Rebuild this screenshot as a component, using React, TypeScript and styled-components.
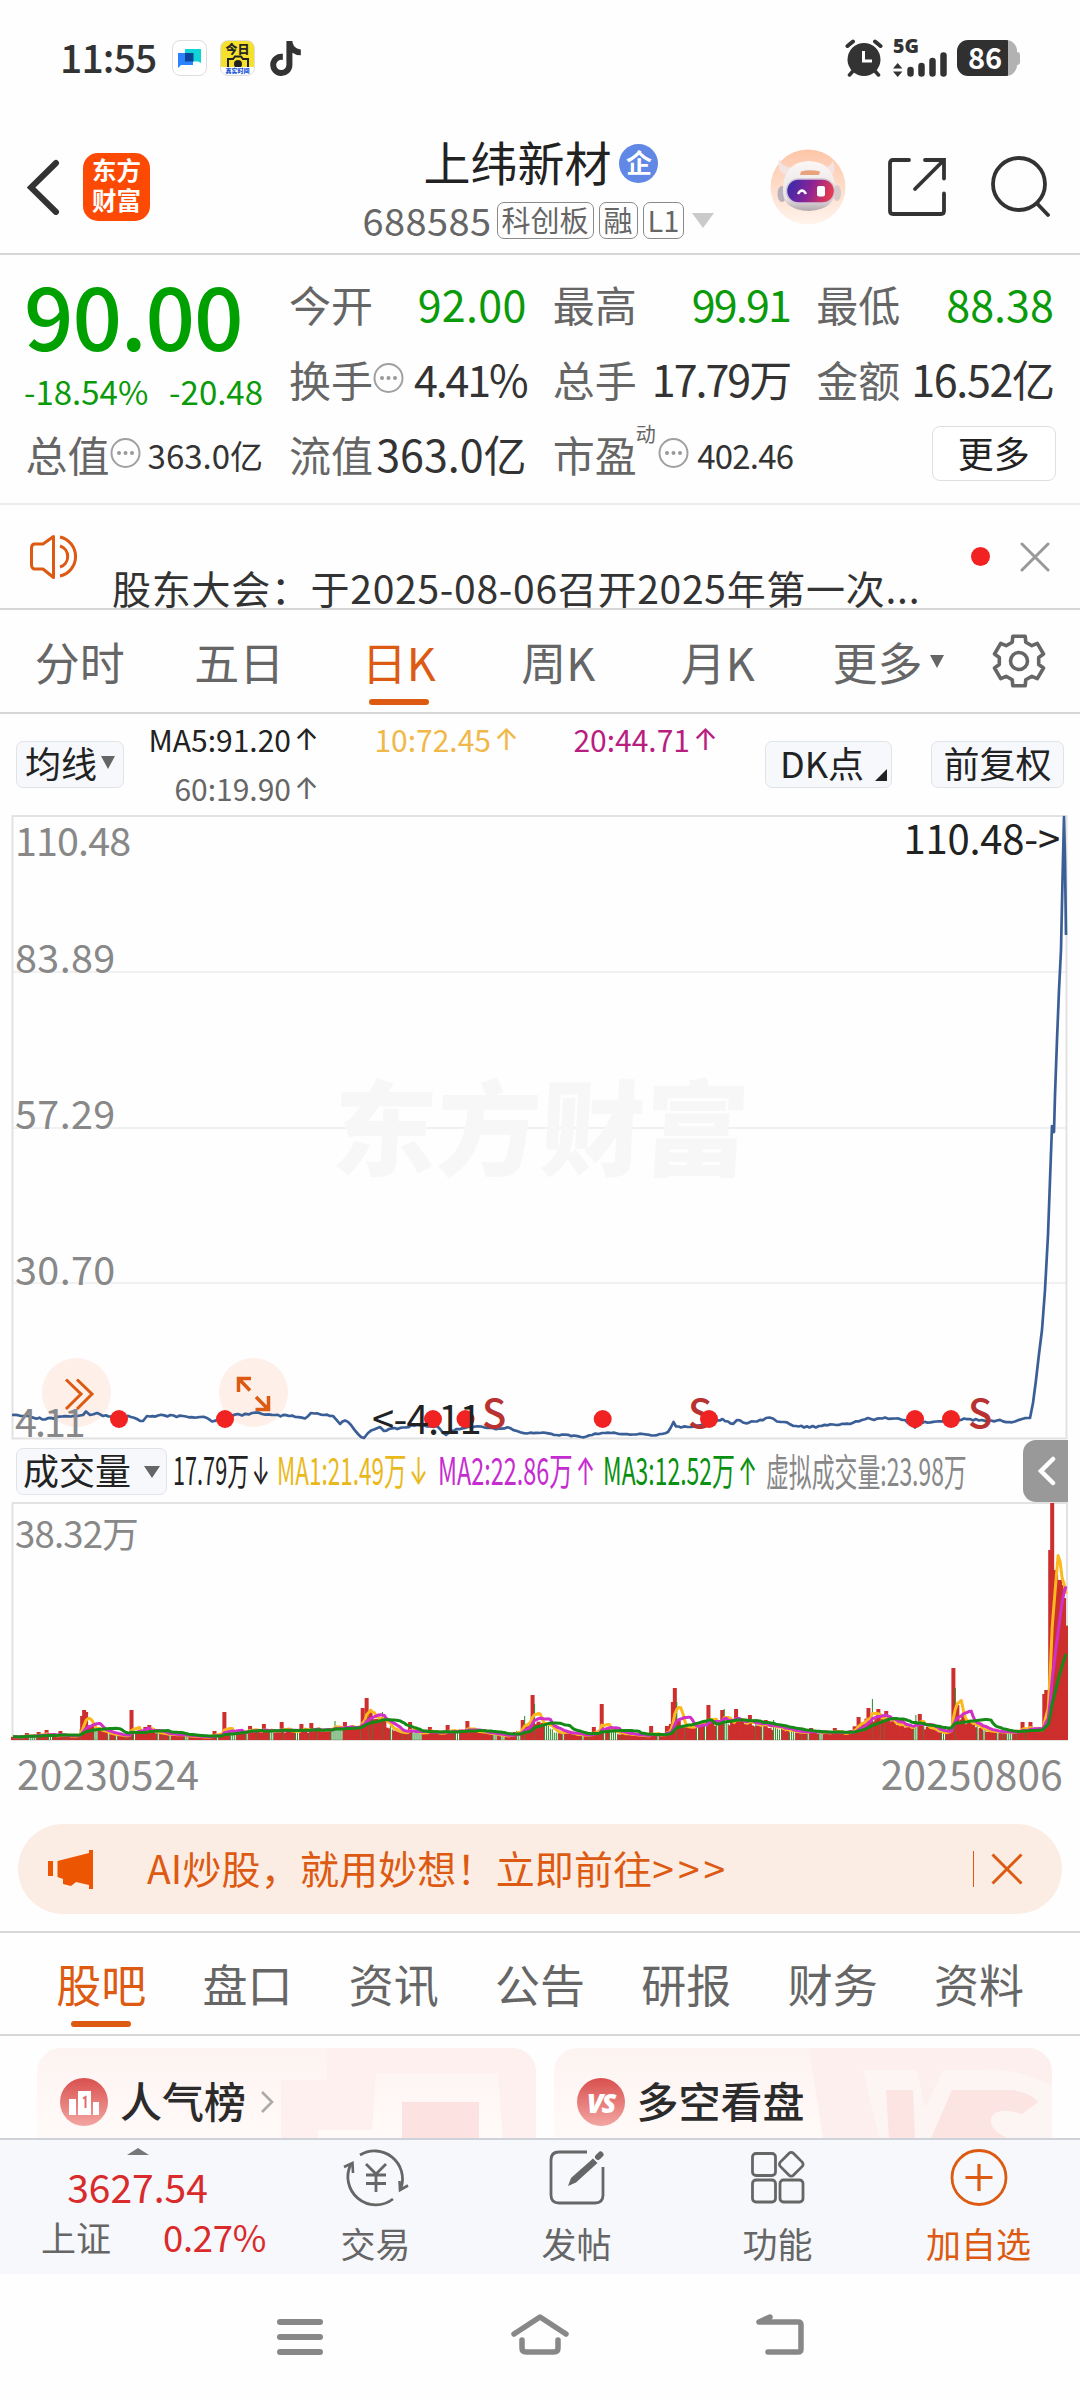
import React, { useLayoutEffect, useRef, useState } from 'react';
import styled, { createGlobalStyle, css } from 'styled-components';
import { FaTiktok } from 'react-icons/fa6';

const C = {
  ink: '#262626',
  dark: '#333',
  mid: '#666',
  light: '#888',
  green: '#0a9a0a',
  red: '#d92b2b',
  orange: '#dc5a12',
  rule: '#d6d6d6',
  panel: '#f6f8fb',
};

const GlobalStyle = createGlobalStyle`
  * { box-sizing: border-box; }
  body {
    margin: 0;
    background: #fefefe;
    font-family: "Noto Sans CJK SC", "Noto Sans", sans-serif;
    color: ${C.ink};
  }
  svg { display: block; flex: none; }
`;

const Screen = styled.div`
  width: 1080px;
  height: 2400px;
  overflow: hidden;
  display: flex;
  flex-direction: column;
  white-space: nowrap;
`;

/* ---------- status bar ---------- */

const StatusBar = styled.div`
  height: 116px;
  flex: none;
  display: flex;
  align-items: center;
  padding: 0 60px 0 60px;
`;

const Clock = styled.div`
  width: 112px;
  font-size: 39px;
  line-height: 56px;
  font-weight: 500;
  letter-spacing: -0.8px;
  color: ${C.dark};
  margin-top: -5px;
`;

const StatusApps = styled.div`
  display: flex;
  align-items: center;
  gap: 13px;
`;

const AppTile = styled.div<{ $yellow?: boolean }>`
  width: 35px;
  height: 36px;
  border-radius: 8px;
  border: 1px solid #dedede;
  background: ${p => (p.$yellow ? 'linear-gradient(#f5e02c 0 76%, #fff 76%)' : '#fff')};
  display: flex;
  flex-direction: column;
  align-items: center;
  justify-content: center;
  overflow: hidden;
`;

const TinyTop = styled.div`
  font-size: 12px;
  line-height: 13px;
  font-weight: 900;
`;

const TinyBottom = styled.div`
  font-size: 6px;
  line-height: 8px;
  font-weight: 900;
  color: #1c55d8;
`;

const StatusRight = styled.div`
  margin-left: auto;
  display: flex;
  align-items: center;
  gap: 10px;
`;

const Signal = styled.div`
  width: 54px;
  display: flex;
  flex-direction: column;
`;

const NetLabel = styled.div`
  font-family: "Open Sans", "Noto Sans", sans-serif;
  font-size: 19.5px;
  line-height: 14px;
  height: 13px;
  font-weight: 800;
  color: ${C.dark};
`;

const Battery = styled.div`
  width: 60px;
  height: 36px;
  border-radius: 11px;
  background: linear-gradient(90deg, #303030 0 51px, #b2b2b2 51px);
  color: #fff;
  font-size: 29px;
  line-height: 33px;
  font-weight: 700;
  padding-left: 11px;
`;

const BatteryWrap = styled.div`
  display: flex;
  align-items: center;
`;

const BatteryTip = styled.div`
  width: 3px;
  height: 13px;
  border-radius: 0 3px 3px 0;
  background: #b2b2b2;
`;

/* ---------- header ---------- */

const Header = styled.header`
  height: 139px;
  flex: none;
  padding: 5px 30px 0 27px;
  border-bottom: 2px solid ${C.rule};
  display: grid;
  grid-template-columns: 1fr auto 1fr;
  align-items: center;
`;

const HeaderLeft = styled.div`
  display: flex;
  align-items: center;
  gap: 23px;
`;

const HeaderRight = styled.div`
  display: flex;
  align-items: center;
  justify-content: flex-end;
  gap: 42px;
`;

const Brand = styled.div`
  width: 67px;
  height: 68px;
  border-radius: 15px;
  background: #fc4a04;
  color: #fff;
  font-weight: 700;
  font-size: 24.5px;
  line-height: 30px;
  text-align: center;
  padding-top: 2px;
`;

const TitleColumn = styled.div`
  display: flex;
  flex-direction: column;
  align-items: center;
`;

const TitleRow = styled.div`
  height: 62px;
  display: flex;
  align-items: center;
  gap: 8px;
  font-size: 47px;
  line-height: 60px;
  padding: 0 0 0 5px;
  color: #222;
`;

const Enterprise = styled.span`
  width: 39px;
  height: 39px;
  border-radius: 50%;
  background: #6088e4;
  color: #fff;
  font-size: 26px;
  line-height: 36px;
  font-weight: 700;
  text-align: center;
  margin-top: 5px;
`;

const CodeRow = styled.div`
  height: 52px;
  display: flex;
  align-items: center;
  gap: 5px;
  font-size: 38px;
  line-height: 50px;
  padding-top: 4px;
  color: ${C.mid};
`;

const Code = styled.span`
  letter-spacing: 0.4px;
`;

const Tag = styled.span`
  height: 37px;
  padding: 0 4px;
  border: 1.5px solid #8a8a8a;
  border-radius: 7px;
  font-size: 29px;
  line-height: 32px;
`;

const Triangle = styled.span<{ $w: number; $h: number; $c: string; $up?: boolean }>`
  flex: none;
  width: 0;
  height: 0;
  border-left: ${p => p.$w / 2}px solid transparent;
  border-right: ${p => p.$w / 2}px solid transparent;
  ${p =>
    p.$up
      ? css`border-bottom: ${p.$h}px solid ${p.$c};`
      : css`border-top: ${p.$h}px solid ${p.$c};`}
`;

const CodeArrow = styled(Triangle)`
  margin-left: 3px;
`;

/* ---------- quote panel ---------- */

const QuotePanel = styled.section`
  height: 250px;
  flex: none;
  padding: 11px 26px 0 27px;
  border-bottom: 2px solid #ececec;
  display: grid;
  grid-template-columns: repeat(4, 236px);
  grid-template-rows: repeat(3, 75px);
  column-gap: 27.6px;
`;

const LastPrice = styled.div`
  grid-row: span 2;
  color: #00a000;
  padding-top: 7px;
`;

const BigNumber = styled.div`
  font-size: 87px;
  line-height: 80px;
  font-weight: 500;
  letter-spacing: -1.2px;
  margin-left: -3px;
`;

const Change = styled.div`
  margin-top: 16px;
  display: flex;
  justify-content: space-between;
  font-size: 33px;
  line-height: 44px;
  margin-left: -3px;
  color: ${C.green};
`;

const Cell = styled.div`
  display: flex;
  align-items: center;
  line-height: 75px;
`;

const CellLabel = styled.span`
  font-size: 42px;
  color: ${C.mid};
  margin-left: -1.5px;
`;

const Sup = styled.span`
  font-size: 20px;
  line-height: 24px;
  color: ${C.mid};
  align-self: flex-start;
  margin: 6px 2px 0 -1px;
`;

const CellValue = styled.span<{ $green?: boolean; $small?: boolean; $ls?: number }>`
  margin-left: auto;
  font-size: ${p => (p.$small ? 33 : 43)}px;
  letter-spacing: ${p => p.$ls ?? 0}px;
  color: ${p => (p.$green ? C.green : C.dark)};
  padding-top: ${p => (p.$small ? 3 : 0)}px;
`;

const RatioValue = styled(CellValue)`
  margin-right: -3px;
`;

const MoreButton = styled.button`
  margin: 0 -2px 0 auto;
  width: 124px;
  height: 55px;
  border: 1.5px solid #dfdfdf;
  border-radius: 8px;
  background: #fff;
  font: inherit;
  font-size: 36px;
  line-height: 46px;
  color: #222;
  padding: 0 0 4px;
`;

/* ---------- notice ---------- */

const Notice = styled.section`
  height: 105px;
  flex: none;
  border-bottom: 2px solid ${C.rule};
  display: flex;
  align-items: center;
  padding: 0 30px 0 29px;
`;

const NoticeText = styled.div`
  width: 821px;
  margin: 60px 0 0 31px;
  font-size: 39px;
  line-height: 40px;
  letter-spacing: 0.72px;
  color: ${C.dark};
`;

const RedDot = styled.span`
  width: 19px;
  height: 19px;
  border-radius: 50%;
  background: #f22222;
  margin: 0 30px 0 auto;
`;

/* ---------- tab rows ---------- */

const PeriodTabs = styled.nav`
  height: 104px;
  flex: none;
  display: flex;
  align-items: center;
  border-bottom: 2px solid ${C.rule};
`;

const Tab = styled.div<{ $w: number; $active?: boolean; $bar?: number }>`
  position: relative;
  width: ${p => p.$w}px;
  height: 100%;
  display: flex;
  align-items: center;
  justify-content: center;
  font-size: 45px;
  color: ${p => (p.$active ? C.orange : C.mid)};
  ${p =>
    p.$active &&
    css`
      &::after {
        content: '';
        position: absolute;
        left: calc(50% - 30px);
        bottom: ${p.$bar ?? 7}px;
        width: 60px;
        height: 6px;
        border-radius: 3px;
        background: ${C.orange};
      }
    `}
`;

const MoreTab = styled.div`
  width: 193px;
  padding-left: 35px;
  display: flex;
  align-items: center;
  gap: 7px;
  font-size: 45px;
  color: ${C.mid};
`;

const InfoTabs = styled.nav`
  height: 105px;
  flex: none;
  padding-left: 28px;
  display: flex;
  align-items: center;
  border-top: 2px solid ${C.rule};
  border-bottom: 2px solid ${C.rule};
`;

/* ---------- chart controls ---------- */

const ChartControls = styled.div`
  height: 100px;
  flex: none;
  display: flex;
  align-items: center;
  padding: 0 16px;
`;

const Chip = styled.button<{ $w: number; $gap?: number }>`
  width: ${p => p.$w}px;
  height: 47px;
  flex: none;
  border: 1.5px solid #e1e4e7;
  border-radius: 7px;
  background: ${C.panel};
  font: inherit;
  font-size: 36px;
  line-height: 40px;
  color: #222;
  padding: 0 0 4px;
  display: flex;
  align-items: center;
  justify-content: center;
  gap: ${p => p.$gap ?? 5}px;
`;

const LowTriangle = styled(Triangle)`
  margin-top: 5px;
`;

const Corner = styled.span`
  width: 0;
  height: 0;
  border-left: 12px solid transparent;
  border-bottom: 12px solid #222;
  margin: 25px -10px 0 6px;
`;

const Legend = styled.div`
  display: grid;
  grid-template-columns: 191px 200px 199px;
  grid-auto-rows: 49px;
  height: 100px;
  margin-right: 51px;
`;

const LegendItem = styled.div<{ $c: string }>`
  display: flex;
  justify-content: flex-end;
  align-items: center;
  font-size: 30px;
  color: ${p => p.$c};
`;

const Arrow = styled.span`
  font-family: Inter, "Liberation Sans", sans-serif;
  margin-left: 5px;
`;

const LegendArrow = styled(Arrow)`
  margin: 0 -4px 0 3px;
`;

/* ---------- charts ---------- */

const PriceBox = styled.div`
  position: relative;
  height: 626px;
  flex: none;
`;

const VolumeBox = styled.div`
  position: relative;
  height: 240px;
  flex: none;
`;

const Watermark = styled.div`
  position: absolute;
  left: 333px;
  top: 234px;
  font-size: 104px;
  line-height: 150px;
  font-weight: 900;
  color: #f7f7f7;
  transform: skewX(-3deg);
`;

const AxisLabel = styled.div<{ $top: number; $size?: number; $ls?: number }>`
  position: absolute;
  left: 15px;
  top: ${p => p.$top}px;
  font-size: ${p => p.$size ?? 39.5}px;
  line-height: 40px;
  letter-spacing: ${p => p.$ls ?? 0.4}px;
  color: ${C.light};
`;

const Marker = styled.div<{ $x: number; $top: number; $right?: boolean; $ls?: number }>`
  position: absolute;
  ${p => (p.$right ? 'right' : 'left')}: ${p => p.$x}px;
  top: ${p => p.$top}px;
  font-size: 40px;
  line-height: 40px;
  letter-spacing: ${p => p.$ls ?? -0.2}px;
  color: #222;
`;

const SellMark = styled.div<{ $x: number }>`
  position: absolute;
  left: ${p => p.$x}px;
  top: 574px;
  font-size: 40px;
  line-height: 46px;
  font-weight: 500;
  color: #b83232;
`;

const Round = styled.div<{ $x: number }>`
  position: absolute;
  left: ${p => p.$x}px;
  top: 544px;
  width: 69px;
  height: 69px;
  border-radius: 50%;
  background: #feefe9;
`;

const Layer = styled.svg`
  position: absolute;
  left: 0;
  top: 0;
`;

/* ---------- volume toolbar ---------- */

const VolumeBar = styled.div`
  height: 62px;
  flex: none;
  display: flex;
  align-items: center;
  padding: 0 12px 0 16px;
`;

const FitBox = styled.div<{ $w: number; $gap: number; $c: string }>`
  width: ${p => p.$w}px;
  margin-left: ${p => p.$gap}px;
  flex: none;
  color: ${p => p.$c};
  font-size: 38px;
  line-height: 56px;
  margin-top: -2px;
`;

const FitInner = styled.span`
  display: inline-block;
  transform-origin: left center;
`;

const Collapse = styled.button`
  width: 45px;
  height: 62px;
  margin-left: auto;
  border: 0;
  padding: 0 0 0 3px;
  border-radius: 13px 0 0 13px;
  background: #999;
  display: flex;
  align-items: center;
  justify-content: center;
`;

const DateRow = styled.div`
  height: 82px;
  flex: none;
  display: flex;
  justify-content: space-between;
  padding: 3px 17px 0 17px;
  font-size: 40.5px;
  line-height: 56px;
  letter-spacing: 0.3px;
  color: ${C.light};
`;

/* ---------- promo ---------- */

const Promo = styled.div`
  height: 90px;
  flex: none;
  margin: 0 18px 17px;
  border-radius: 45px;
  background: #fcede4;
  display: flex;
  align-items: center;
  padding: 0 39px 0 30px;
  color: ${C.orange};
`;

const PromoText = styled.div`
  margin-left: 53px;
  font-size: 39px;
  line-height: 84px;
  letter-spacing: 0.15px;
  padding-bottom: 5px;
`;

const Chevrons = styled.span`
  letter-spacing: 4px;
`;

const PromoRule = styled.span`
  width: 1.5px;
  height: 36px;
  margin: 0 17px 0 auto;
  background: ${C.orange};
`;

/* ---------- cards ---------- */

const Cards = styled.div`
  height: 102px;
  flex: none;
  padding: 12px 28px 0 37px;
  display: flex;
  gap: 18px;
  overflow: hidden;
`;

const Card = styled.div`
  position: relative;
  width: 498.5px;
  height: 130px;
  border-radius: 24px;
  overflow: hidden;
  background: linear-gradient(#fdf4f2, #fff9f7 80px);
`;

const CardArt = styled.svg`
  position: absolute;
  right: 0;
  top: 0;
`;

const CardHead = styled.div`
  position: relative;
  height: 108px;
  display: flex;
  align-items: center;
  padding-left: 23px;
`;

const CardTitle = styled.div`
  margin: -5px 13px 0 12px;
  font-size: 42px;
  line-height: 60px;
  font-weight: 500;
  color: #2b2b2b;
`;

const Badge = styled.div`
  width: 48px;
  height: 48px;
  border-radius: 50%;
  background: linear-gradient(#d9504e, #f3a6a2);
  color: #fff;
  font-size: 27px;
  font-style: italic;
  font-weight: 900;
  font-family: "Open Sans", sans-serif;
  letter-spacing: -2px;
  display: flex;
  align-items: center;
  justify-content: center;
`;

/* ---------- bottom bar ---------- */

const BottomBar = styled.footer`
  height: 136px;
  flex: none;
  border-top: 2px solid #cfd3d9;
  background: ${C.panel};
  display: flex;
`;

const IndexBlock = styled.div`
  width: 275px;
  display: flex;
  flex-direction: column;
  align-items: center;
  padding: 8px 0 0 0;
`;

const IndexValue = styled.div`
  font-size: 39px;
  line-height: 46px;
  margin-top: 8px;
  color: ${C.red};
`;

const IndexRow = styled.div`
  width: 100%;
  display: flex;
  justify-content: space-between;
  align-items: center;
  padding: 0 9px 0 41px;
  font-size: 35px;
  line-height: 50px;
  margin-top: 2px;
  color: ${C.mid};
`;

const Percent = styled.span`
  font-size: 36.5px;
  letter-spacing: -0.3px;
  padding-top: 1px;
  color: ${C.red};
`;

const Action = styled.div<{ $active?: boolean }>`
  width: 201px;
  display: flex;
  flex-direction: column;
  align-items: center;
  padding-top: 7px;
  color: ${p => (p.$active ? C.orange : C.mid)};
`;

const ActionLabel = styled.div`
  font-size: 35px;
  line-height: 50px;
  margin-top: 11px;
`;

const NavBar = styled.div`
  height: 125px;
  flex: none;
  display: flex;
  justify-content: center;
  align-items: center;
  gap: 180px;
`;

/* ---------- data ---------- */

const CHART_LEFT = 12;
const CHART_RIGHT = 1067;

const makeRandom = (seed: number) => () => {
  seed = (seed * 1664525 + 1013904223) >>> 0;
  return seed / 4294967296;
};

const PRICE: [number, number][] = [
  [12, 1415], [21, 1416], [31, 1417], [45, 1419.5], [62, 1416.5], [77, 1416], [83, 1415], [86, 1411.5],
  [90, 1415], [97, 1413], [103, 1416], [114, 1416], [131, 1417], [137, 1419], [143, 1421], [147, 1416],
  [158, 1415.5], [186, 1416.5], [200, 1417], [207, 1418], [212, 1421.5], [220, 1419], [229, 1416],
  [238, 1414], [242, 1415.5], [252, 1413], [262, 1414], [275, 1415], [289, 1416], [305, 1418.5],
  [311, 1413], [324, 1415], [333, 1416], [340, 1424], [345, 1420.5], [351, 1425], [358, 1434],
  [364, 1438], [368, 1433], [380, 1427], [384, 1431], [389, 1429], [403, 1427.5], [417, 1425],
  [427, 1426.5], [437, 1426], [446, 1435], [451, 1430.5], [465, 1428], [475, 1426.5], [499, 1428.5],
  [510, 1428], [517, 1431], [527, 1433.5], [540, 1433], [554, 1435], [562, 1434.5], [574, 1435.5],
  [581, 1437], [592, 1435], [602, 1433], [611, 1433], [619, 1434], [633, 1434.5], [643, 1434],
  [654, 1435.5], [660, 1434], [668, 1432], [673.5, 1422], [676, 1426.5], [681, 1427.5], [688, 1427],
  [698, 1425.5], [712, 1423], [722.5, 1419], [728, 1421.5], [733, 1424], [737, 1420], [743, 1422.5],
  [757, 1421.5], [766, 1418], [773, 1418.5], [777, 1421.5], [784, 1422], [796, 1426], [809.5, 1427.5],
  [819, 1426], [836, 1425], [850, 1424], [862, 1420], [868, 1418], [874, 1420], [885, 1417.5],
  [895, 1418.5], [905, 1420], [915, 1427.5], [922, 1423], [936, 1421.5], [950, 1420], [970, 1419],
  [979, 1420.5], [991, 1420.5], [1015, 1421.5], [1022, 1419], [1030, 1418],
];

const SURGE: [number, number][] = [
  [1033, 1403], [1036, 1380], [1039, 1354], [1042, 1330], [1045, 1290], [1048, 1235], [1050, 1180],
  [1052, 1126], [1054, 1132], [1055, 1095], [1057, 1040], [1059, 990], [1061, 950], [1062.5, 880],
  [1064, 817], [1065, 860], [1066, 935],
];

const buildPricePath = () => {
  const rnd = makeRandom(11);
  const out: string[] = [];
  for (let i = 0; i < PRICE.length - 1; i++) {
    const [x0, y0] = PRICE[i];
    const [x1, y1] = PRICE[i + 1];
    const n = Math.max(1, Math.round((x1 - x0) / 3));
    for (let k = 0; k < n; k++) {
      const t = k / n;
      const y = y0 + (y1 - y0) * t + (k ? (rnd() - 0.5) * 2 : 0);
      out.push(`${(x0 + (x1 - x0) * t).toFixed(1)},${Math.min(y, 1438).toFixed(1)}`);
    }
  }
  out.push('1030,1418');
  SURGE.forEach(([x, y]) => out.push(`${x},${y}`));
  return out.join(' ');
};

const BASE: [number, number][] = [
  [12, 3], [45, 5], [78, 4], [82, 18], [92, 13], [108, 7], [128, 4], [134, 9], [150, 10], [160, 7], [205, 3],
  [225, 7], [250, 9], [310, 9], [345, 12], [358, 13], [364, 26], [384, 18], [396, 8], [440, 8], [470, 10],
  [490, 6], [508, 4], [520, 10], [530, 18], [540, 18], [555, 9], [588, 5], [604, 11], [620, 7], [650, 4],
  [668, 7], [674, 24], [684, 14], [710, 18], [745, 19], [775, 12], [800, 8], [845, 7], [862, 18],
  [878, 22], [900, 14], [925, 13], [948, 7], [956, 24], [970, 16], [985, 9], [1010, 8], [1032, 11],
  [1043, 8], [1049, 60], [1055, 130], [1067, 135],
];

const PEAKS: [number, number, boolean?][] = [
  [26, 7], [38, 8], [47, 10], [60, 9], [82, 24], [85, 30], [87, 28], [132, 30], [146, 13], [150, 15],
  [214, 9], [224, 28], [251, 14], [264, 16], [282, 18], [302, 16], [312, 17], [336, 19, true], [345, 18],
  [362, 32], [366, 42], [370, 28], [382, 28, true], [410, 18], [430, 13], [448, 15], [468, 19],
  [522, 20], [524, 24, true], [532, 45], [534, 36, true], [593, 13], [602, 36], [652, 14], [666, 14],
  [672, 38], [674, 52], [676, 38, true], [708, 35], [722, 30], [724, 31, true], [736, 31], [750, 25], [766, 20],
  [774, 20, true], [812, 12], [835, 12], [858, 23], [868, 32], [872, 41, true], [878, 31], [886, 29],
  [903, 22], [916, 25, true], [920, 26], [954, 72], [956, 52, true], [958, 35], [963, 25], [1022, 18], [1030, 18],
  [1045, 46], [1047, 50], [1050, 190], [1052, 237], [1054, 170], [1056, 165], [1058, 160], [1060, 160], [1062, 155], [1064, 142],
];

const interpolate = (pts: [number, number][], x: number) => {
  for (let i = 0; i < pts.length - 1; i++) {
    if (x <= pts[i + 1][0]) {
      const t = (x - pts[i][0]) / (pts[i + 1][0] - pts[i][0]);
      return pts[i][1] + (pts[i + 1][1] - pts[i][1]) * t;
    }
  }
  return pts[pts.length - 1][1];
};

type Bar = { x: number; h: number; up: boolean };

const buildBars = (): Bar[] => {
  const rnd = makeRandom(5);
  const count = 534;
  const step = (CHART_RIGHT - CHART_LEFT) / count;
  const bars: Bar[] = [];
  let up = true;
  for (let i = 0; i < count; i++) {
    if (rnd() < (up ? 0.2 : 0.42)) up = !up;
    const x = CHART_LEFT + (i + 0.5) * step;
    const h = interpolate(BASE, x) * (0.75 + rnd() * 0.4);
    bars.push({ x, h, up: x > 1040 ? true : up });
  }
  PEAKS.forEach(([x, h, down]) => {
    const i = Math.min(count - 1, Math.round((x - CHART_LEFT) / step - 0.5));
    bars[i] = { ...bars[i], h, up: !down };
  });
  return bars;
};

const BARS = buildBars();
const FLOOR = 1740;

const average = (n: number) =>
  BARS.map((b, i) => {
    const part = BARS.slice(Math.max(0, i - n + 1), i + 1);
    const v = part.reduce((s, p) => s + p.h, 0) / part.length;
    return `${b.x.toFixed(1)},${(FLOOR - v).toFixed(1)}`;
  }).join(' ');

const DOTS = [119, 225, 433, 465.5, 602.7, 709, 915, 951];

/* ---------- drawings ---------- */

const gearPath = () => {
  const pts: string[] = [];
  for (let k = 0; k < 6; k++) {
    const mid = -90 + k * 60;
    ([[-20, 20], [-14, 25.5], [14, 25.5], [20, 20]] as [number, number][]).forEach(([a, r]) => {
      const t = ((mid + a) * Math.PI) / 180;
      pts.push(`${(28 + r * Math.cos(t)).toFixed(1)} ${(28 + r * Math.sin(t)).toFixed(1)}`);
    });
  }
  return `M${pts.join('L')}Z`;
};

const Dots3 = () => (
  <svg width="31" height="32" viewBox="0 0 31 32">
    <circle cx="15.5" cy="15" r="14" fill="none" stroke="#a0a0a0" strokeWidth="2" />
    <circle cx="9" cy="15" r="2" fill="#999" />
    <circle cx="15.5" cy="15" r="2" fill="#999" />
    <circle cx="22" cy="15" r="2" fill="#999" />
  </svg>
);

const Robot = () => (
  <svg width="76" height="78" viewBox="0 0 76 78">
    <defs>
      <linearGradient id="halo" x1="0" y1="0" x2="0" y2="1">
        <stop offset="0" stopColor="#fdc5a8" />
        <stop offset="1" stopColor="#fff4ec" />
      </linearGradient>
      <linearGradient id="shell" x1="0" y1="0" x2="0" y2="1">
        <stop offset="0" stopColor="#fbf7f6" />
        <stop offset="0.75" stopColor="#e9e2e3" />
        <stop offset="1" stopColor="#b0a6ab" />
      </linearGradient>
      <linearGradient id="visor" x1="0" y1="0" x2="1" y2="0.2">
        <stop offset="0" stopColor="#2b2cae" />
        <stop offset="0.55" stopColor="#8a2396" />
        <stop offset="1" stopColor="#e23a52" />
      </linearGradient>
    </defs>
    <circle cx="38" cy="39" r="37.5" fill="url(#halo)" />
    <path d="M9 11Q6 22 15 27L22 20Q12 19 9 11ZM63 13Q67 22 61 29L54 20Q60 19 63 13Z" fill="#f3e4e2" />
    <ellipse cx="12" cy="46" rx="4.5" ry="8" fill="#b9b1ba" />
    <ellipse cx="67" cy="45" rx="4" ry="8" fill="#d9c9cb" />
    <path d="M13 40Q14 14 39 13Q64 14 65 40Q67 61 39 63Q11 62 13 40Z" fill="url(#shell)" />
    <path d="M31 23.5Q40 21 50 23.5L49 27H30Z" fill="#e8a27c" />
    <rect x="16.5" y="31" width="48" height="24" rx="12" fill="url(#visor)" stroke="#cfc4d4" strokeWidth="1.5" />
    <path d="M28 46q4-7 8 0" fill="none" stroke="#fff" strokeWidth="2.4" />
    <rect x="47" y="38" width="8" height="10.5" rx="2" fill="#fff" />
  </svg>
);

const Alarm = () => (
  <svg width="38" height="38" viewBox="0 0 38 38" fill="none" stroke={C.dark} strokeLinecap="round">
    <circle cx="19" cy="20.5" r="16.5" fill={C.dark} stroke="none" />
    <path d="M2.5 7L8 2.5M35.5 7L30 2.5" strokeWidth="4" />
    <path d="M8 32L4.5 36M30 32L33.5 36" strokeWidth="3.5" />
    <path d="M18.5 12V22H27" stroke="#fff" strokeWidth="3" strokeLinecap="butt" />
  </svg>
);

/* Squeezes one figure of the toolbar into the width it has. */
const Fit = ({ w, gap, c, children }: { w: number; gap: number; c: string; children: React.ReactNode }) => {
  const ref = useRef<HTMLSpanElement>(null);
  const [scale, setScale] = useState(0.57);
  useLayoutEffect(() => {
    if (ref.current) setScale(w / ref.current.offsetWidth);
  }, [w]);
  return (
    <FitBox $w={w} $gap={gap} $c={c}>
      <FitInner ref={ref} style={{ transform: `scaleX(${scale})` }}>
        {children}
      </FitInner>
    </FitBox>
  );
};

const PriceChart = () => (
  <PriceBox>
    <Layer width="1080" height="626" viewBox="0 814 1080 626">
      <path d="M12 972H1067M12 1128H1067M12 1283H1067" stroke="#f1f1f1" strokeWidth="2" />
      <rect x="12.5" y="816" width="1054" height="622.5" fill="none" stroke="#e2e2e2" strokeWidth="2" />
    </Layer>
    <Watermark>东方财富</Watermark>
    <Round $x={42} />
    <Round $x={219} />
    <Layer width="1080" height="626" viewBox="0 814 1080 626">
      <g fill="none" stroke={C.orange} strokeWidth="3">
        <path d="M66 1379.5L81 1394L66 1409M77 1379.5L92 1394L77 1409" />
        <path d="M251 1378.5H238.5V1392M239 1379L250 1390.5M255.5 1409.5H268.5V1396M268 1409L256 1397" strokeWidth="3.5" />
      </g>
      <polyline points={buildPricePath()} fill="none" stroke="#3a5f96" strokeWidth="2.7" strokeLinejoin="round" />
      {DOTS.slice(0, 5).map(x => (
        <circle key={x} cx={x} cy="1419" r="9" fill="#f02222" />
      ))}
    </Layer>
    <AxisLabel $top={5} $ls={-0.9}>110.48</AxisLabel>
    <AxisLabel $top={122}>83.89</AxisLabel>
    <AxisLabel $top={278}>57.29</AxisLabel>
    <AxisLabel $top={433.5}>30.70</AxisLabel>
    <AxisLabel $top={586} $ls={-2}>4.11</AxisLabel>
    <Marker $x={20} $top={3} $right>110.48-&gt;</Marker>
    <Marker $x={372} $top={583} $ls={-0.8}>&lt;-4.11</Marker>
    <SellMark $x={482}>S</SellMark>
    <SellMark $x={688}>S</SellMark>
    <SellMark $x={968}>S</SellMark>
    <Layer width="1080" height="626" viewBox="0 814 1080 626">
      {DOTS.slice(5).map(x => (
        <circle key={x} cx={x} cy="1419" r="9" fill="#f02222" />
      ))}
    </Layer>
  </PriceBox>
);

const VolumeChart = () => (
  <VolumeBox>
    <Layer width="1080" height="240" viewBox="0 1502 1080 240">
      <path d="M12 1503H1067V1740H12.5V1503" fill="none" stroke="#e2e2e2" strokeWidth="2" />
      {BARS.map((b, i) =>
        b.up ? (
          <rect key={i} x={b.x - 2} y={FLOOR - b.h} width="4" height={b.h} fill="#cc2f2d" />
        ) : (
          <rect key={i} x={b.x - 0.5} y={FLOOR - b.h} width="1" height={b.h} fill="#2a8a2a" />
        ),
      )}
      <g fill="none" strokeWidth="3" strokeLinejoin="round">
        <polyline points={average(5)} stroke="#fbb91e" />
        <polyline points={average(10)} stroke="#d02fc8" />
        <polyline points={average(20)} stroke="#168a16" />
      </g>
    </Layer>
    <AxisLabel $top={11} $size={36.5} $ls={-0.8}>38.32万</AxisLabel>
  </VolumeBox>
);

export default function App() {
  return (
    <>
      <GlobalStyle />
      <Screen>
        <StatusBar>
          <Clock>11:55</Clock>
          <StatusApps>
            <AppTile>
              <svg width="25" height="20" viewBox="0 0 25 20">
                <path d="M8 1H24V15L21 13.5H8Z" fill="#0fd3d6" />
                <path d="M1 5H16V17H4L1 20Z" fill="#2a82ff" />
                <rect x="8" y="5" width="8.5" height="8.5" fill="#0b4396" />
              </svg>
            </AppTile>
            <AppTile $yellow>
              <TinyTop>今日</TinyTop>
              <svg width="22" height="12" viewBox="0 0 22 12">
                <path d="M1 12V4H6L8 1.5H14L16 4H21V12" fill="none" stroke="#222" strokeWidth="2" />
                <circle cx="11" cy="9" r="4" fill="#222" />
              </svg>
              <TinyBottom>真实时间</TinyBottom>
            </AppTile>
            <FaTiktok size={35} color={C.dark} />
          </StatusApps>
          <StatusRight>
            <Alarm />
            <Signal>
              <NetLabel>5G</NetLabel>
              <svg width="54" height="25" viewBox="0 0 54 25">
                <path d="M0 16.5L4.7 11L9.4 16.5ZM0 19.5L4.7 25L9.4 19.5Z" fill={C.dark} />
                <g stroke={C.dark} strokeWidth="6.5" strokeLinecap="round">
                  <path d="M17.5 18V21.5M28.5 14V21.5M39.5 9V21.5M50.5 3.5V21.5" />
                </g>
              </svg>
            </Signal>
            <BatteryWrap>
              <Battery>86</Battery>
              <BatteryTip />
            </BatteryWrap>
          </StatusRight>
        </StatusBar>

        <Header>
          <HeaderLeft>
            <svg width="33" height="56" viewBox="0 0 33 56">
              <path d="M29 4L4 28.5L29 53" fill="none" stroke={C.dark} strokeWidth="6" strokeLinecap="round" />
            </svg>
            <Brand>
              东方
              <br />
              财富
            </Brand>
          </HeaderLeft>
          <TitleColumn>
            <TitleRow>
              上纬新材<Enterprise>企</Enterprise>
            </TitleRow>
            <CodeRow>
              <Code>688585</Code>
              <Tag>科创板</Tag>
              <Tag>融</Tag>
              <Tag>L1</Tag>
              <CodeArrow $w={22} $h={15} $c="#cacaca" />
            </CodeRow>
          </TitleColumn>
          <HeaderRight>
            <Robot />
            <svg width="58" height="60" viewBox="0 0 58 60" fill="none" stroke={C.dark} strokeWidth="3.8" strokeLinecap="round">
              <path d="M21 3H5Q2 3 2 6V54Q2 57 5 57H53Q56 57 56 54V36.5M37 3H56V21.5M55 4L27 32" />
            </svg>
            <svg width="62" height="62" viewBox="0 0 62 62" fill="none" stroke={C.dark} strokeWidth="3.8" strokeLinecap="round">
              <circle cx="31" cy="28" r="26" />
              <path d="M49.5 48L60 59" />
            </svg>
          </HeaderRight>
        </Header>

        <QuotePanel>
          <LastPrice>
            <BigNumber>90.00</BigNumber>
            <Change>
              <span>-18.54%</span>
              <span>-20.48</span>
            </Change>
          </LastPrice>
          <Cell>
            <CellLabel>今开</CellLabel>
            <CellValue $green $ls={0.3}>92.00</CellValue>
          </Cell>
          <Cell>
            <CellLabel>最高</CellLabel>
            <CellValue $green $ls={-1.8}>99.91</CellValue>
          </Cell>
          <Cell>
            <CellLabel>最低</CellLabel>
            <CellValue $green>88.38</CellValue>
          </Cell>
          <Cell>
            <CellLabel>换手</CellLabel>
            <Dots3 />
            <CellValue $ls={-2.1}>4.41%</CellValue>
          </Cell>
          <Cell>
            <CellLabel>总手</CellLabel>
            <CellValue $ls={-2}>17.79万</CellValue>
          </Cell>
          <Cell>
            <CellLabel>金额</CellLabel>
            <CellValue $ls={-1.3}>16.52亿</CellValue>
          </Cell>
          <Cell>
            <CellLabel>总值</CellLabel>
            <Dots3 />
            <CellValue $small>363.0亿</CellValue>
          </Cell>
          <Cell>
            <CellLabel>流值</CellLabel>
            <CellValue>363.0亿</CellValue>
          </Cell>
          <Cell>
            <CellLabel>市盈</CellLabel>
            <Sup>动</Sup>
            <Dots3 />
            <RatioValue $small $ls={-0.8}>402.46</RatioValue>
          </Cell>
          <Cell>
            <MoreButton>更多</MoreButton>
          </Cell>
        </QuotePanel>

        <Notice>
          <svg width="52" height="46" viewBox="0 0 52 46" fill="none" stroke={C.orange} strokeWidth="3">
            <path d="M24.5 2.5V43.5L14 35H5Q2.5 34 2.5 31V14Q2.5 11 5 10H14Z" strokeLinejoin="round" />
            <path d="M31 12A11 11 0 0 1 31 33M31 3A20 20 0 0 1 31 42" />
          </svg>
          <NoticeText>股东大会：于2025-08-06召开2025年第一次...</NoticeText>
          <RedDot />
          <svg width="30" height="30" viewBox="0 0 30 30">
            <path d="M2 2L28 28M28 2L2 28" stroke="#999" strokeWidth="3" strokeLinecap="round" />
          </svg>
        </Notice>

        <PeriodTabs>
          <Tab $w={159.5}>分时</Tab>
          <Tab $w={159.5}>五日</Tab>
          <Tab $w={159.5} $active>日K</Tab>
          <Tab $w={159.5}>周K</Tab>
          <Tab $w={159.5}>月K</Tab>
          <MoreTab>
            更多
            <Triangle $w={15} $h={13} $c="#666" />
          </MoreTab>
          <svg width="56" height="56" viewBox="0 0 56 56" fill="none" stroke={C.mid} strokeWidth="3.6" strokeLinejoin="round">
            <path d={gearPath()} />
            <circle cx="28" cy="28" r="8.5" />
          </svg>
        </PeriodTabs>

        <ChartControls>
          <Chip $w={108} $gap={4}>
            均线
            <Triangle $w={14} $h={13} $c="#666" />
          </Chip>
          <Legend>
            <LegendItem $c="#222">MA5:91.20<LegendArrow>↑</LegendArrow></LegendItem>
            <LegendItem $c="#f0b848">10:72.45<LegendArrow>↑</LegendArrow></LegendItem>
            <LegendItem $c="#b81e80">20:44.71<LegendArrow>↑</LegendArrow></LegendItem>
            <LegendItem $c={C.mid}>60:19.90<LegendArrow>↑</LegendArrow></LegendItem>
          </Legend>
          <Chip $w={127}>
            DK点
            <Corner />
          </Chip>
          <svg width="39" height="1" />
          <Chip $w={133}>前复权</Chip>
        </ChartControls>

        <PriceChart />

        <VolumeBar>
          <Chip $w={151} $gap={13}>
            成交量
            <LowTriangle $w={16} $h={12} $c="#666" />
          </Chip>
          <Fit w={97} gap={6} c="#222">17.79万<Arrow>↓</Arrow></Fit>
          <Fit w={151} gap={7} c="#e9b91c">MA1:21.49万<Arrow>↓</Arrow></Fit>
          <Fit w={157} gap={10} c="#c52cd0">MA2:22.86万<Arrow>↑</Arrow></Fit>
          <Fit w={154} gap={8} c="#0a9010">MA3:12.52万<Arrow>↑</Arrow></Fit>
          <Fit w={201} gap={9} c="#888">虚拟成交量:23.98万</Fit>
          <Collapse>
            <svg width="18" height="30" viewBox="0 0 18 30">
              <path d="M15 3L3 15L15 27" fill="none" stroke="#fff" strokeWidth="4.5" strokeLinecap="round" />
            </svg>
          </Collapse>
        </VolumeBar>

        <VolumeChart />

        <DateRow>
          <span>20230524</span>
          <span>20250806</span>
        </DateRow>

        <Promo>
          <svg width="46" height="42" viewBox="0 0 46 42" fill="#ec5603">
            <path d="M0 13H5V28H0ZM9.5 13L41 5V2H45V41H41V37L28 34L23 38L15 36V31L9.5 29Z" />
          </svg>
          <PromoText>
            AI炒股，就用妙想！立即前往<Chevrons>&gt;&gt;&gt;</Chevrons>
          </PromoText>
          <PromoRule />
          <svg width="32" height="32" viewBox="0 0 32 32">
            <path d="M1.5 1.5L30.5 30.5M30.5 1.5L1.5 30.5" stroke={C.orange} strokeWidth="3" />
          </svg>
        </Promo>

        <InfoTabs>
          <Tab $w={146.3} $active $bar={7}>股吧</Tab>
          <Tab $w={146.3}>盘口</Tab>
          <Tab $w={146.3}>资讯</Tab>
          <Tab $w={146.3}>公告</Tab>
          <Tab $w={146.3}>研报</Tab>
          <Tab $w={146.3}>财务</Tab>
          <Tab $w={146.3}>资料</Tab>
        </InfoTabs>

        <Cards>
          <Card>
            <CardArt width="260" height="90" viewBox="0 0 260 90">
              <path d="M51 0H260V90H227L222 25H100L96 82H42V90H5V32H51Z" fill="#fdf0ee" />
              <path d="M126 54H203V90H126Z" fill="#fce3e1" />
            </CardArt>
            <CardHead>
              <Badge>
                <svg width="30" height="26" viewBox="0 0 30 26">
                  <path d="M0 10H7V26H0ZM9 2H22V26H9ZM24 13H30V26H24Z" fill="#fff" />
                  <path d="M14 9.5L16.5 8V19" fill="none" stroke="#e06b68" strokeWidth="2" />
                </svg>
              </Badge>
              <CardTitle>人气榜</CardTitle>
              <svg width="16" height="24" viewBox="0 0 16 24">
                <path d="M3 2L13 12L3 22" fill="none" stroke="#aaa" strokeWidth="2.6" />
              </svg>
            </CardHead>
          </Card>
          <Card>
            <CardArt width="245" height="90" viewBox="0 0 245 90">
              <path d="M2 0H245V90H16Z" fill="#fcefed" />
              <path d="M56 22H110L118 60L136 22H175Q205 18 245 38V90H72Z" fill="#fdf5f3" />
              <path d="M79 42H106L108 90H82Z" fill="#fbe4e2" />
              <path d="M124 90L145 42H205Q225 45 231 54L215 66Q190 58 184 70Q182 82 200 90Z" fill="#fbe4e2" />
            </CardArt>
            <CardHead>
              <Badge>VS</Badge>
              <CardTitle>多空看盘</CardTitle>
            </CardHead>
          </Card>
        </Cards>

        <BottomBar>
          <IndexBlock>
            <Triangle $w={22} $h={7} $c="#777" $up />
            <IndexValue>3627.54</IndexValue>
            <IndexRow>
              上证
              <Percent>0.27%</Percent>
            </IndexRow>
          </IndexBlock>
          <Action>
            <svg width="68" height="60" viewBox="0 0 68 60" fill="none" stroke={C.mid} strokeWidth="2.8">
              <path d="M18 8A28 28 0 0 1 59 41M51 52A28 28 0 0 1 9 17" />
              <path d="M57.5 34L58 43L66 38.5M11 26L10.5 16L2 20" strokeWidth="2.6" />
              <path d="M24 17L34 27L44 17M34 27V45M24 28H44M24 36.5H44" />
            </svg>
            <ActionLabel>交易</ActionLabel>
          </Action>
          <Action>
            <svg width="56" height="60" viewBox="0 0 56 60" fill="none" stroke={C.mid} strokeWidth="2.8">
              <path d="M38 5H10Q2 5 2 13V48Q2 56 10 56H46Q54 56 54 48V20" />
              <path d="M19 39L22 31L44 11.5L48.5 16L27 35.5Z" fill={C.mid} stroke="none" />
              <path d="M49 10L51.5 7.5" strokeWidth="6" strokeLinecap="round" />
            </svg>
            <ActionLabel>发帖</ActionLabel>
          </Action>
          <Action>
            <svg width="56" height="60" viewBox="0 0 56 60" fill="none" stroke={C.mid} strokeWidth="2.8">
              <rect x="2.5" y="6.5" width="23" height="22" rx="3.5" />
              <rect x="2.5" y="33" width="23" height="22" rx="3.5" />
              <rect x="30" y="33" width="23" height="22" rx="3.5" />
              <rect x="32" y="8" width="18.5" height="18.5" rx="3" transform="rotate(45 41.25 17.25)" />
            </svg>
            <ActionLabel>功能</ActionLabel>
          </Action>
          <Action $active>
            <svg width="60" height="60" viewBox="0 0 60 60" fill="none" stroke={C.orange} strokeWidth="2.8">
              <circle cx="30" cy="30.5" r="27" />
              <path d="M30 17V44M16.5 30.5H43.5" strokeWidth="3.2" />
            </svg>
            <ActionLabel>加自选</ActionLabel>
          </Action>
        </BottomBar>

        <NavBar>
          <svg width="60" height="46" viewBox="0 0 60 46" stroke={C.light} strokeWidth="6" strokeLinecap="round">
            <path d="M10 8H50M10 23H50M10 38H50" />
          </svg>
          <svg width="60" height="46" viewBox="0 0 60 46" fill="none" stroke={C.light} strokeWidth="5.5" strokeLinecap="round" strokeLinejoin="round">
            <path d="M4 20L30 3L56 20" />
            <path d="M12 26V34Q12 38 16 38H44Q48 38 48 34V26" />
          </svg>
          <svg width="60" height="46" viewBox="0 0 60 46" fill="none" stroke={C.light} strokeWidth="5.5" strokeLinecap="round" strokeLinejoin="round">
            <path d="M20 3L9 8H48Q51 8 51 11V35Q51 38 48 38H18" />
          </svg>
        </NavBar>
      </Screen>
    </>
  );
}
